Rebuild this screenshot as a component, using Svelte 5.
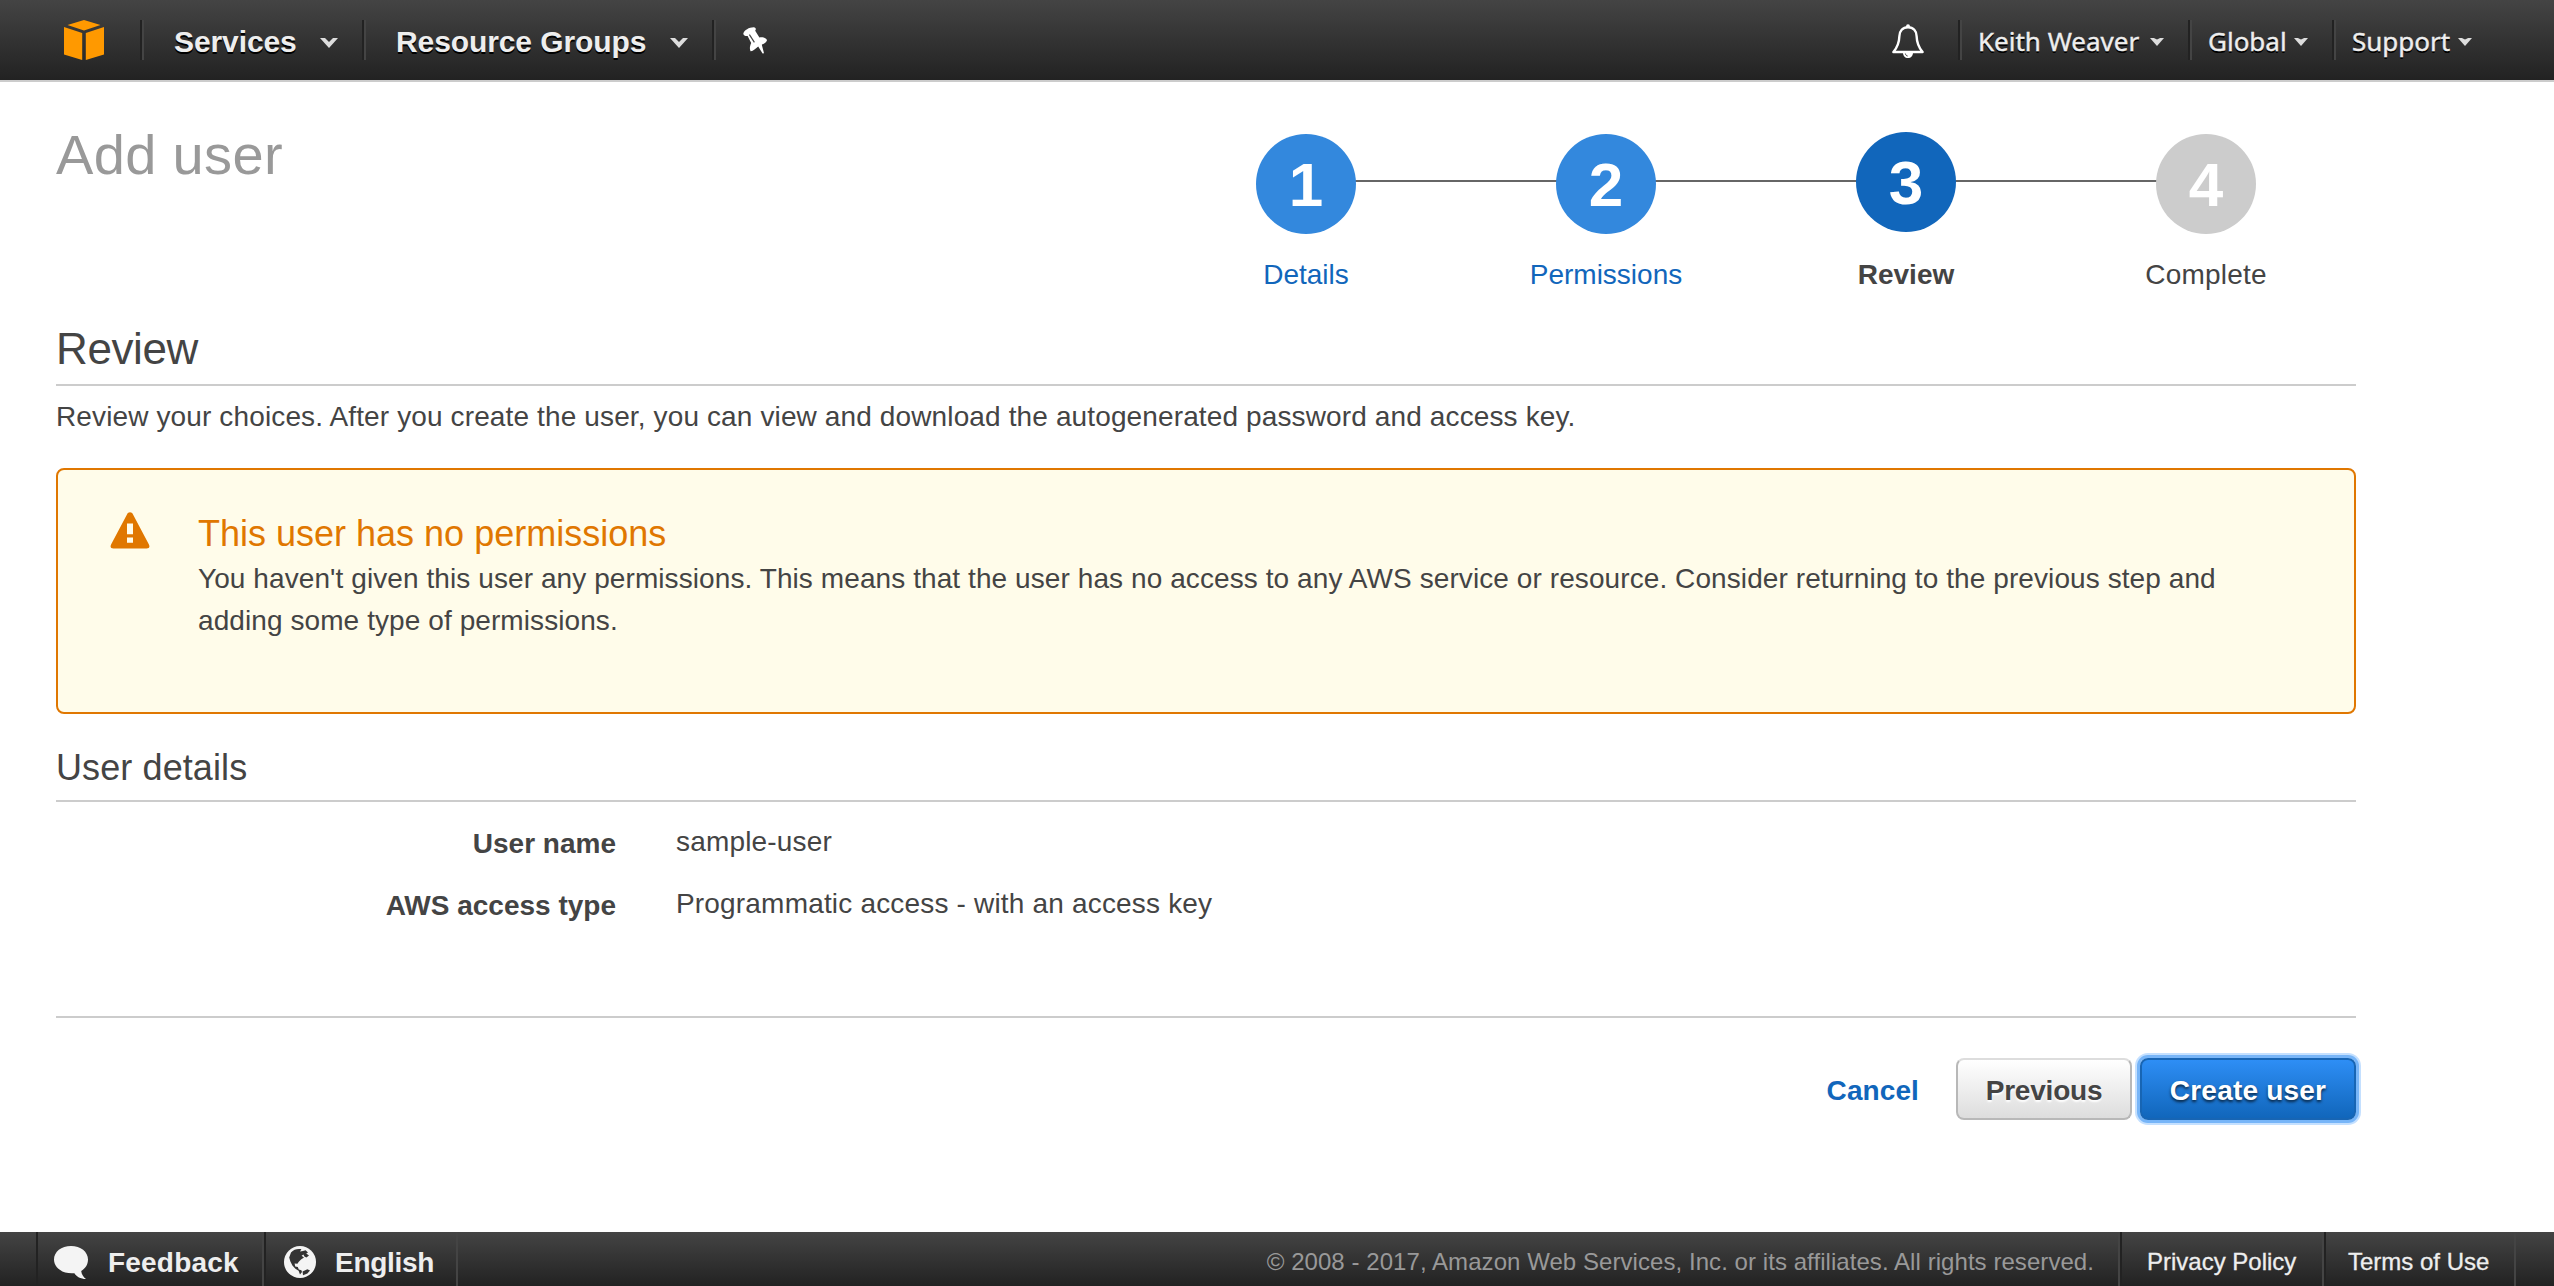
<script>
  const steps = [
    { n: 1, label: 'Details', state: 'done' },
    { n: 2, label: 'Permissions', state: 'done' },
    { n: 3, label: 'Review', state: 'current' },
    { n: 4, label: 'Complete', state: 'todo' }
  ];
  const details = [
    { key: 'User name', value: 'sample-user' },
    { key: 'AWS access type', value: 'Programmatic access - with an access key' }
  ];
</script>

{#snippet chevron(small)}
  <svg class={small ? 'chev small' : 'chev'} viewBox="0 0 18 10">
    <path d={small ? 'M0 0H5L9 1.8L13 0H18L9 10Z' : 'M0 0H5L9 4L13 0H18L9 10Z'} />
  </svg>
{/snippet}

<div class="page">
  <header class="topbar">
    <svg class="logo" viewBox="0 0 40 40">
      <path d="M20 0L36.5 5L20 10.6L3.5 5ZM0 7L18.2 13V40L0 34.5ZM40 7L21.8 13V40L40 34.5Z" />
    </svg>
    <span class="sep"></span>
    <a class="menu services" href="#services">Services {@render chevron(false)}</a>
    <span class="sep"></span>
    <a class="menu groups" href="#groups">Resource Groups {@render chevron(false)}</a>
    <span class="sep"></span>
    <svg class="pin" viewBox="0 0 24 27">
      <path
        d="M0.3 6.4C1.5 3.2 6.5 0 11.5 0.4C13.4 1.2 13 2.6 12.2 3.8L16.4 10.4C19.6 9.8 23.4 10.8 24 13.2C23.6 15.2 21.4 16.4 18.8 17.8L21 26.2L19.6 26.6L15.2 19.6C12.8 21.6 9.6 24.6 7.6 24.2C6.4 22.4 6.8 19 8.2 16L4.6 9C2.6 9.2 0.4 8.6 0.3 6.4Z"
      />
      <path class="slit" d="M6.4 7.6L11.4 15.4" />
    </svg>

    <svg class="bell" viewBox="0 0 32 34">
      <path
        class="outline"
        d="M16 3.2C10.4 3.2 7.6 7 7.4 12C7.2 19 5.4 23.4 1.4 28H30.6C26.6 23.4 24.8 19 24.6 12C24.4 7 21.6 3.2 16 3.2Z"
      />
      <path class="solid" d="M14 2.4A2 2.2 0 0 1 18 2.4V4H14ZM11 28.5H21C21 32 19 34 16 34S11 32 11 28.5Z" />
      <path class="clap" d="M13.4 29.6C13.6 31 14.4 31.8 15.6 32" />
    </svg>
    <span class="sep"></span>
    <a class="sub keith" href="#account">Keith Weaver {@render chevron(true)}</a>
    <span class="sep"></span>
    <a class="sub global" href="#region">Global {@render chevron(true)}</a>
    <span class="sep"></span>
    <a class="sub support" href="#support">Support {@render chevron(true)}</a>
  </header>

  <main>
    <div class="head">
      <h1>Add user</h1>
      <ol class="steps">
        {#each steps as s}
          <li class={s.state}>
            <span class="dot">{s.n}</span>
            <span class="label">{s.label}</span>
          </li>
        {/each}
      </ol>
    </div>

    <h2>Review</h2>
    <p class="intro">
      Review your choices. After you create the user, you can view and download the autogenerated password and access key.
    </p>

    <section class="alert">
      <svg class="warn" viewBox="0 0 40 37">
        <path
          d="M20 0.3C21.4 0.3 22.2 1 22.9 2.2L38.8 32.2C40.2 34.8 39.2 36.6 36.6 36.6H3.4C0.8 36.6 -0.2 34.8 1.2 32.2L17.1 2.2C17.8 1 18.6 0.3 20 0.3Z"
        />
        <path class="mark" d="M17 11.6H23V22.3H17ZM17 25.6H23V30.8H17Z" />
      </svg>
      <div class="message">
        <h3>This user has no permissions</h3>
        <p>
          You haven't given this user any permissions. This means that the user has no access to any AWS service or resource. Consider returning to the previous step and<br />adding some type of permissions.
        </p>
      </div>
    </section>

    <h4>User details</h4>
    <dl>
      {#each details as d}
        <dt>{d.key}</dt>
        <dd>{d.value}</dd>
      {/each}
    </dl>

    <div class="actions">
      <a class="cancel" href="#cancel">Cancel</a>
      <button class="previous">Previous</button>
      <button class="create">Create user</button>
    </div>
  </main>

  <footer>
    <a class="tool feedback" href="#feedback">
      <svg class="bubble" viewBox="0 0 34 34">
        <path d="M17 0C26.6 0 34 5.8 34 13.6C34 18.6 31.4 22.6 27.2 25C27.6 28.4 29.4 31 32 33C26.6 33 22.4 30.6 20.4 27.2C8.6 28.2 0 22 0 13.6C0 5.8 7.4 0 17 0Z" />
      </svg>
      Feedback
    </a>
    <a class="tool english" href="#language">
      <svg class="globe" viewBox="0 0 32 32">
        <circle cx="16" cy="16" r="16" />
        <path
          d="M7 6.6C9.6 3.4 13.4 2.6 17.4 3.2L16 5.4L19 5L21.6 4.2L24 6.6L22.2 7.4L25 9.6L22.4 11.4L20.4 10.4L19.4 8.6L17.6 9.8L20 11.6L17 13.6L14.8 15.8L13.4 17.8L10.6 17.6L11.2 20.4L13.8 21L14.8 23.4L17.4 24.2L18 26L16 28.6L14.6 24.8L11.4 22.8L8.4 19.4L6.4 15.6L5.2 11.4Z"
        />
        <path d="M18.6 25.4L23.4 23.2L26 24.4L23.4 27.6L19 29.2Z" />
      </svg>
      English
    </a>
    <span class="copyright">© 2008 - 2017, Amazon Web Services, Inc. or its affiliates. All rights reserved.</span>
    <a class="legal privacy" href="#privacy">Privacy Policy</a>
    <a class="legal terms" href="#terms">Terms of Use</a>
  </footer>
</div>

<style>
  :global(body) {
    margin: 0;
    background: #fff;
  }
  .page {
    display: flex;
    flex-direction: column;
    width: 2554px;
    height: 1286px;
    overflow: hidden;
    font: 28px/42px 'Liberation Sans', Arial, sans-serif;
    color: #444;
  }
  a {
    text-decoration: none;
  }
  h1, h2, h3, h4, p, ol, dl, dd {
    margin: 0;
    padding: 0;
    font-weight: 400;
  }

  .topbar {
    display: flex;
    align-items: flex-start;
    flex: none;
    height: 80px;
    border-bottom: 2px solid #ccc;
    background: linear-gradient(#444, #222);
  }
  .topbar > * {
    flex: none;
  }
  .logo {
    width: 40px;
    height: 40px;
    margin: 20px 36px 0 64px;
    fill: #f90;
  }
  .sep {
    box-sizing: border-box;
    width: 4px;
    height: 40px;
    margin-top: 20px;
    border-left: 2px solid #222;
    border-right: 2px solid #444;
  }
  .menu,
  .sub {
    box-sizing: border-box;
    display: flex;
    justify-content: space-between;
    height: 80px;
    color: #eee;
    text-shadow: 0 2px 0 #000;
    white-space: nowrap;
  }
  .menu {
    font-weight: 700;
    font-size: 30px;
    line-height: 83px;
    padding-right: 24px;
    padding-left: 30px;
    letter-spacing: -0.1px;
  }
  .services {
    width: 218px;
  }
  .groups {
    width: 346px;
  }
  .chev {
    width: 18px;
    height: 10px;
    margin-top: 38px;
    fill: #ddd;
  }
  .chev.small {
    width: 14px;
    height: 8px;
  }
  .pin {
    width: 24px;
    height: 27px;
    margin: 27px auto 0 27px;
    fill: #fff;
  }
  .slit {
    stroke: #444;
    stroke-width: 1.2;
  }
  .bell {
    width: 32px;
    height: 34px;
    margin: 24px 34px 0 0;
  }
  .outline {
    fill: none;
    stroke: #fff;
    stroke-width: 2.4;
    stroke-linejoin: round;
  }
  .solid {
    fill: #fff;
  }
  .clap {
    fill: none;
    stroke: #333;
    stroke-width: 1;
  }
  .sub {
    font: 26px/82px 'Noto Sans', 'Open Sans', sans-serif;
    padding-left: 16px;
    padding-right: 24px;
    -webkit-text-stroke: 0.4px #eee;
  }
  .keith {
    width: 226px;
  }
  .global {
    width: 140px;
  }
  .support {
    width: 218px;
    padding-right: 82px;
  }

  main {
    flex: 1;
    width: 2300px;
    padding-left: 56px;
  }
  .head {
    display: flex;
    justify-content: space-between;
    height: 228px;
  }
  h1 {
    padding-top: 41px;
    font-size: 56px;
    line-height: 64px;
    letter-spacing: 0.35px;
    color: #999;
  }
  .steps {
    display: grid;
    grid-template-columns: repeat(4, 300px);
    height: 200px;
    padding-top: 50px;
    list-style: none;
    text-align: center;
    background: linear-gradient(#666, #666) 150px 98px / 900px 2px no-repeat;
  }
  .steps li {
    display: flex;
    flex-direction: column;
    align-items: center;
    gap: 20px;
    padding-top: 2px;
  }
  .steps li.current {
    padding-top: 0;
    gap: 22px;
    font-weight: 700;
  }
  .dot {
    width: 100px;
    height: 100px;
    border-radius: 50%;
    background: #38d;
    color: #fff;
    font-weight: 700;
    font-size: 62px;
    line-height: 101px;
  }
  .current .dot {
    background: #16b;
  }
  .todo .dot {
    background: #ccc;
  }
  .done .label {
    color: #16b;
  }
  .todo .label {
    letter-spacing: 0.2px;
  }

  h2 {
    height: 74px;
    border-bottom: 2px solid #ccc;
    font-size: 44px;
    line-height: 77px;
    letter-spacing: -0.4px;
  }
  .intro {
    padding-top: 10px;
    letter-spacing: 0.128px;
    white-space: nowrap;
  }
  .alert {
    box-sizing: border-box;
    display: flex;
    height: 246px;
    margin-top: 30px;
    padding: 42px 52px;
    border: 2px solid #e07700;
    border-radius: 8px;
    background: #fffcea;
  }
  .warn {
    width: 40px;
    height: 37px;
    margin-right: 48px;
    fill: #e07700;
    flex: none;
  }
  .mark {
    fill: #fffcea;
  }
  .message p {
    letter-spacing: 0.085px;
    white-space: nowrap;
  }
  h3 {
    height: 46px;
    font-size: 36px;
    line-height: 44px;
    color: #e07700;
  }
  h4 {
    height: 86px;
    border-bottom: 2px solid #ccc;
    font-size: 36px;
    line-height: 107px;
    letter-spacing: 0.1px;
  }
  dl {
    display: grid;
    grid-template-columns: 560px 1fr;
    column-gap: 60px;
    row-gap: 20px;
    height: 195px;
    padding-top: 19px;
    align-content: start;
    border-bottom: 2px solid #ccc;
  }
  dt {
    padding-top: 2px;
    height: 40px;
    font-weight: 700;
    text-align: right;
  }
  dd {
    letter-spacing: 0.18px;
  }
  .actions {
    display: flex;
    justify-content: flex-end;
    align-items: center;
    padding-top: 40px;
    font-weight: 700;
  }
  .cancel {
    padding-top: 3px;
    margin-right: 37px;
    letter-spacing: 0.1px;
    color: #16b;
  }
  button {
    box-sizing: border-box;
    height: 62px;
    padding: 3px 0 0;
    border-radius: 8px;
    font: inherit;
  }
  .previous {
    width: 176px;
    margin-right: 8px;
    border: 2px solid #b8b8b8;
    border-top-color: #ddd;
    background: linear-gradient(#fff, #ddd);
    color: #444;
    letter-spacing: -0.2px;
    text-shadow: 0 2px 2px #fff;
  }
  .create {
    width: 216px;
    border: 2px solid #1765b4;
    background: linear-gradient(#2e8ef5, #1166bb);
    color: #fff;
    letter-spacing: 0.2px;
    text-shadow: 0 2px 3px rgba(0, 0, 0, 0.7);
    box-shadow: 0 0 0 3px #77b5f8, 0 0 0 5px #c4e0ff;
  }

  footer {
    box-sizing: border-box;
    display: flex;
    flex: none;
    height: 54px;
    padding-left: 36px;
    background: linear-gradient(#444, #222);
    font-size: 24px;
    line-height: 59px;
    white-space: nowrap;
  }
  footer a {
    box-sizing: border-box;
    color: #eee;
    border-left: 2px solid #222;
    border-right: 2px solid #444;
  }
  .tool {
    display: flex;
    font-size: 28px;
    font-weight: 700;
    line-height: 61px;
  }
  .feedback {
    width: 228px;
    padding-left: 16px;
    letter-spacing: 0.2px;
  }
  .english {
    width: 194px;
    padding-left: 18px;
    letter-spacing: -0.3px;
  }
  .bubble {
    width: 34px;
    height: 34px;
    margin: 14px 20px 0 0;
    fill: #f4f4f4;
  }
  .globe {
    width: 32px;
    height: 32px;
    margin: 14px 19px 0 0;
    fill: #f4f4f4;
  }
  .globe path {
    fill: #333;
  }
  .copyright {
    margin-left: auto;
    padding-right: 24px;
    border-right: 2px solid #444;
    letter-spacing: 0.06px;
    color: #999;
  }
  .legal {
    -webkit-text-stroke: 0.3px #eee;
  }
  .privacy {
    width: 204px;
    padding-left: 25px;
  }
  .terms {
    width: 192px;
    padding-left: 22px;
    margin-right: 38px;
  }
</style>
